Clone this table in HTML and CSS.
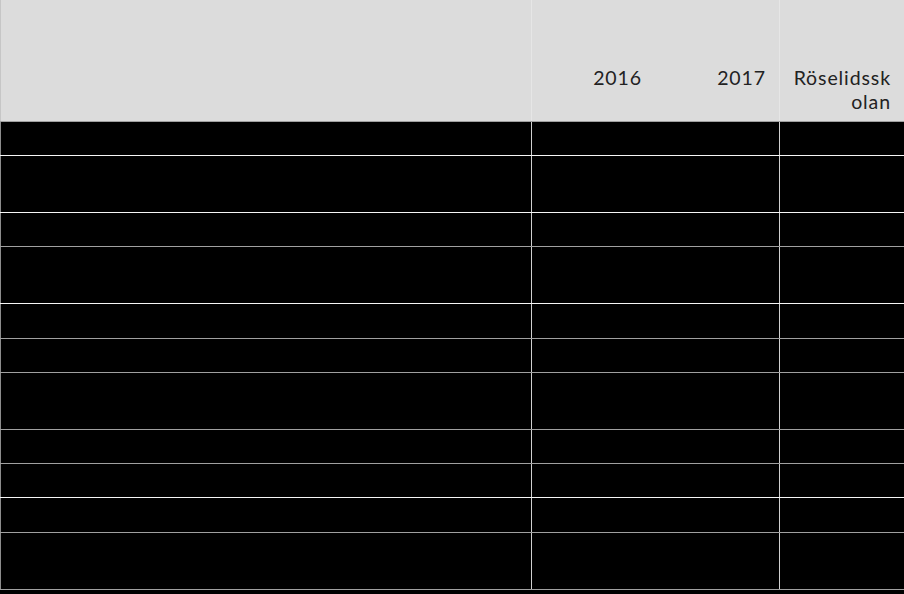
FILE: index.html
```html
<!DOCTYPE html>
<html lang="sv">
<head>
<meta charset="utf-8">
<title>Tabell</title>
<link rel="stylesheet" href="styles.css">
</head>
<body>
<div class="table">
  <div class="row head">
    <div class="cell first"></div>
    <div class="cell sep"><span>2016</span></div>
    <div class="cell"><span>2017</span></div>
    <div class="cell sep"><span>Röselidssk<br>olan</span></div>
  </div>
  <div class="row short gray"><div class="cell first"></div><div class="cell sep"></div><div class="cell"></div><div class="cell sep"></div></div>
  <div class="row tall white"><div class="cell first"></div><div class="cell sep"></div><div class="cell"></div><div class="cell sep"></div></div>
  <div class="row short white"><div class="cell first"></div><div class="cell sep"></div><div class="cell"></div><div class="cell sep"></div></div>
  <div class="row tall gray"><div class="cell first"></div><div class="cell sep"></div><div class="cell"></div><div class="cell sep"></div></div>
  <div class="row mid white"><div class="cell first"></div><div class="cell sep"></div><div class="cell"></div><div class="cell sep"></div></div>
  <div class="row short gray"><div class="cell first"></div><div class="cell sep"></div><div class="cell"></div><div class="cell sep"></div></div>
  <div class="row tall gray"><div class="cell first"></div><div class="cell sep"></div><div class="cell"></div><div class="cell sep"></div></div>
  <div class="row short gray"><div class="cell first"></div><div class="cell sep"></div><div class="cell"></div><div class="cell sep"></div></div>
  <div class="row short gray"><div class="cell first"></div><div class="cell sep"></div><div class="cell"></div><div class="cell sep"></div></div>
  <div class="row mid white"><div class="cell first"></div><div class="cell sep"></div><div class="cell"></div><div class="cell sep"></div></div>
  <div class="row tall gray last"><div class="cell first"></div><div class="cell sep"></div><div class="cell"></div><div class="cell sep"></div></div>
</div>
</body>
</html>
```
FILE: styles.css
```css
html, body {
  margin: 0;
  padding: 0;
  background: #000;
}
.table {
  width: 904px;
  display: flex;
  flex-direction: column;
  font-family: Lato, "Open Sans", sans-serif;
}
.row {
  display: grid;
  grid-template-columns: 531px 124px 124px 125px;
  box-sizing: border-box;
}
.cell {
  box-sizing: border-box;
}
.cell.first {
  border-left: 1px solid #8c8c8c;
}
.cell.sep {
  border-left: 1px solid #d0d0d0;
}
.head {
  height: 121px;
  background: #dcdcdc;
}
.head .cell.first {
  border-left-color: #c6c6c6;
}
.head .cell.sep {
  border-left-color: #e6e6e6;
}
.head .cell {
  padding: 66px 13px 0 0;
  text-align: right;
  font-size: 19.5px;
  line-height: 24px;
  letter-spacing: 0.9px;
  color: #222;
}
.short { height: 34px; }
.mid { height: 35px; }
.tall { height: 57px; }
.white { border-top: 1px solid #f6f6f6; }
.gray { border-top: 1px solid #a0a0a0; }
.last { border-bottom: 1px solid #a0a0a0; height: 58px; }
```
